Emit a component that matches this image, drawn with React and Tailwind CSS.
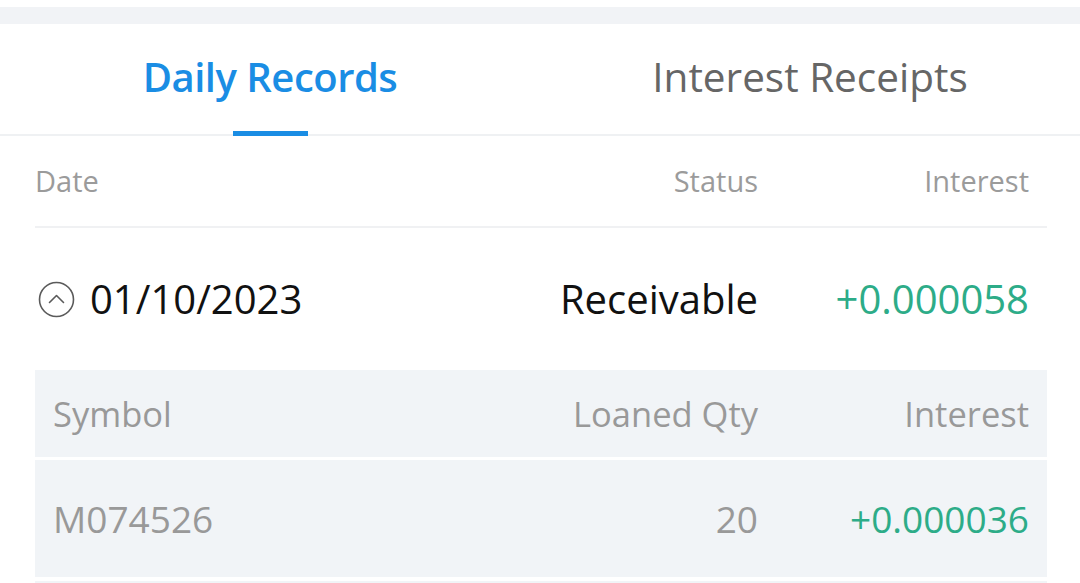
import React, { useState } from 'react';

const Collapse = () => (
  <svg width="37" height="37" viewBox="0 0 37 37" fill="none">
    <circle cx="18.5" cy="18.5" r="17" stroke="#5a5a5a" strokeWidth="1.6" />
    <path d="M11.5 21.5 L18.5 14.5 L25.5 21.5" stroke="#5a5a5a" strokeWidth="1.6" strokeLinecap="round" strokeLinejoin="round" />
  </svg>
);

export default function App() {
  const [tab, setTab] = useState('daily');

  return (
    <div className="w-[1080px] h-[583px] bg-white overflow-hidden font-['Open_Sans',sans-serif]">
      <div className="h-[7px] bg-white" />
      <div className="h-[17px] bg-[#f1f3f6]" />

      {/* Tabs */}
      <div className="flex h-[112px] border-b-2 border-[#eff1f3]">
        <button
          onClick={() => setTab('daily')}
          className="relative flex-1 flex items-center justify-center"
        >
          <span className={`text-[40px] tracking-[-0.5px] pb-[4px] ${tab === 'daily' ? 'font-semibold text-[#1a8de4]' : 'text-[#666]'}`}>
            Daily Records
          </span>
          {tab === 'daily' && (
            <span className="absolute bottom-[-2px] left-[233px] w-[75px] h-[5px] bg-[#1a8de4]" />
          )}
        </button>
        <button
          onClick={() => setTab('interest')}
          className="relative flex-1 flex items-center justify-center"
        >
          <span className={`text-[40.5px] pb-[4px] ${tab === 'interest' ? 'font-semibold text-[#1a8de4]' : 'text-[#666]'}`}>
            Interest Receipts
          </span>
        </button>
      </div>

      <div className="px-[35px] mr-[-2px] w-[1082px]">
        {/* Header */}
        <div className="flex items-center h-[92px] border-b-2 border-[#f0f1f3] text-[29px] text-[#9b9b9b] pr-[18px]">
          <div className="flex-1">Date</div>
          <div className="w-[300px] text-right">Status</div>
          <div className="w-[271px] text-right">Interest</div>
        </div>

        {/* Row */}
        <div className="flex items-center h-[142px] text-[40px] pr-[18px]">
          <div className="flex-1 flex items-center gap-[15px] text-[#111] pl-[3px]">
            <Collapse />
            <span>01/10/2023</span>
          </div>
          <div className="w-[300px] text-right text-[#111]">Receivable</div>
          <div className="w-[271px] text-right text-[#2dac88]">+0.000058</div>
        </div>

        {/* Details */}
        <div className="bg-[#f1f4f7] text-[#999]">
          <div className="flex items-center h-[90px] pl-[18px] pr-[18px] border-b-[3px] border-white text-[34.5px]">
            <div className="flex-1">Symbol</div>
            <div className="w-[300px] text-right">Loaned Qty</div>
            <div className="w-[271px] text-right">Interest</div>
          </div>
          <div className="flex items-center h-[121px] pl-[18px] pr-[18px] border-b-4 border-white text-[37px]">
            <div className="flex-1">M074526</div>
            <div className="w-[300px] text-right">20</div>
            <div className="w-[271px] text-right text-[#2dac88]">+0.000036</div>
          </div>
          <div className="h-[40px]" />
        </div>
      </div>
    </div>
  );
}
